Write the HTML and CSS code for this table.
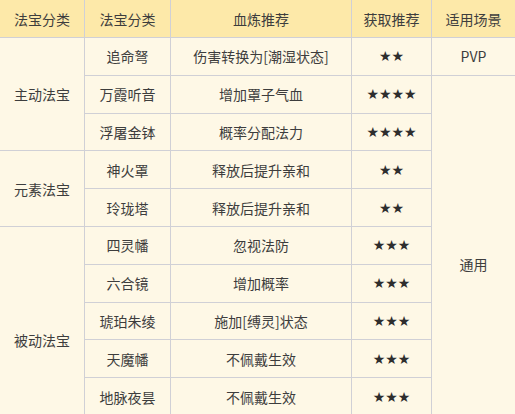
FILE: index.html
```html
<!DOCTYPE html>
<html lang="zh">
<head>
<meta charset="utf-8">
<link rel="stylesheet" href="styles.css">
</head>
<body>
<div class="frame">
<table class="tbl">
  <colgroup>
    <col class="c1"><col class="c2"><col class="c3"><col class="c4"><col class="c5">
  </colgroup>
  <thead>
    <tr><th>法宝分类</th><th>法宝分类</th><th>血炼推荐</th><th>获取推荐</th><th>适用场景</th></tr>
  </thead>
  <tbody>
    <tr><td rowspan="3">主动法宝</td><td>追命弩</td><td>伤害转换为[潮湿状态]</td><td class="star">★★</td><td>PVP</td></tr>
    <tr><td>万霞听音</td><td>增加罩子气血</td><td class="star">★★★★</td><td rowspan="10">通用</td></tr>
    <tr><td>浮屠金钵</td><td>概率分配法力</td><td class="star">★★★★</td></tr>
    <tr><td rowspan="2">元素法宝</td><td>神火罩</td><td>释放后提升亲和</td><td class="star">★★</td></tr>
    <tr><td>玲珑塔</td><td>释放后提升亲和</td><td class="star">★★</td></tr>
    <tr><td rowspan="6">被动法宝</td><td>四灵幡</td><td>忽视法防</td><td class="star">★★★</td></tr>
    <tr><td>六合镜</td><td>增加概率</td><td class="star">★★★</td></tr>
    <tr><td>琥珀朱绫</td><td>施加[缚灵]状态</td><td class="star">★★★</td></tr>
    <tr><td>天魔幡</td><td>不佩戴生效</td><td class="star">★★★</td></tr>
    <tr><td>地脉夜昙</td><td>不佩戴生效</td><td class="star">★★★</td></tr>
    <tr><td></td><td></td><td></td></tr>
  </tbody>
</table>
</div>
</body>
</html>
```

FILE: styles.css
```css
html, body {
  margin: 0;
  padding: 0;
  background: #fef8e6;
}
.frame {
  width: 515px;
  height: 414px;
  overflow: hidden;
}
.tbl {
  border-collapse: collapse;
  table-layout: fixed;
  width: 516px;
  font-family: "Noto Sans CJK SC", "Noto Sans", sans-serif;
  font-size: 14px;
  color: #3d3d3d;
  margin-left: -1px;
  margin-top: -1px;
}
.c1 { width: 85px; }
.c2 { width: 86px; }
.c3 { width: 181px; }
.c4 { width: 80px; }
.c5 { width: 84px; }
.tbl th, .tbl td {
  border: 1px solid #d0d0d6;
  text-align: center;
  vertical-align: middle;
  padding: 0;
  font-weight: normal;
}
.tbl thead tr {
  height: 38px;
}
.tbl th {
  background: #fde9a9;
}
.tbl tbody tr {
  height: 37.8px;
}
.tbl td {
  background: #fef8e6;
}
.star {
  font-family: "DejaVu Sans", sans-serif;
  font-size: 14px;
  color: #2e2e2e;
}
```
